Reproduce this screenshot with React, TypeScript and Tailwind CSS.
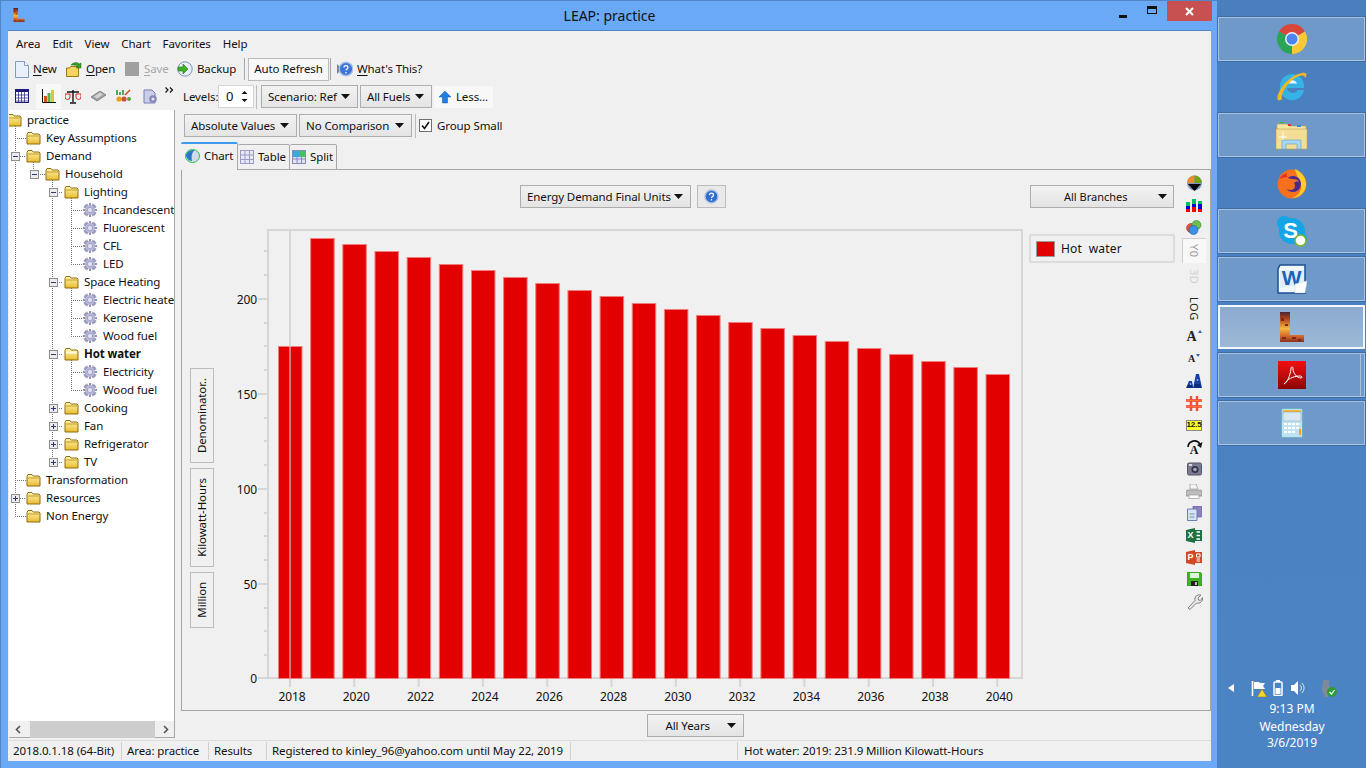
import React from "react";

const Caret = () => (
  <svg width="9" height="5" viewBox="0 0 9 5" className="shrink-0"><path d="M0 0h9L4.5 5z" fill="#111" /></svg>
);

const Drop = ({ label, cls }: { label: string; cls: string }) => (
  <div className={`flex items-center justify-between pl-[6px] pr-[7px] border border-[#adadad] bg-gradient-to-b from-[#f2f2f2] to-[#e4e4e4] whitespace-nowrap ${cls}`}>
    <span>{label}</span>
    <Caret />
  </div>
);

const Folder = ({ open = false }: { open?: boolean }) => (
  <svg width="15" height="14" viewBox="0 0 15 14" className="shrink-0">
    <defs>
      <linearGradient id="fo" x1="0" y1="0" x2="0" y2="1">
        <stop offset="0" stopColor="#fff6b8" />
        <stop offset="1" stopColor="#e8bb2c" />
      </linearGradient>
    </defs>
    <path d="M1 3.500 2 1.500h4l1.200 1.500H13l1 1V13H1z" fill="url(#fo)" stroke="#8f6d10" strokeWidth="1" />
    <path d="M2 5h11" stroke={open ? "#fffbe0" : "#c79a1a"} strokeWidth="1" />
    {open && <path d="M2 6h11" stroke="#fff" strokeWidth="1" />}
  </svg>
);

const Gear = () => (
  <svg width="14" height="14" viewBox="0 0 14 14" className="shrink-0 mr-px">
    <g stroke="#8f8fb8" strokeWidth="2">
      <path d="M7 0v14M0 7h14M2 2l10 10M12 2 2 12" />
      <path d="M3.600 .8l6.800 12.400M10.400 .8 3.600 13.200M.8 3.600l12.400 6.800M.8 10.400l12.400-6.800" strokeWidth="1.200" />
    </g>
    <circle cx="7" cy="7" r="5" fill="#b6b6d6" />
    <circle cx="7" cy="7" r="2.600" fill="#e2e2f0" stroke="#9292bb" strokeWidth=".7" />
  </svg>
);

const Expander = ({ kind }: { kind: "minus" | "plus" | "none" }) => (
  <span className="w-[9px] h-[9px] shrink-0">
    {kind !== "none" && (
      <svg width="9" height="9" viewBox="0 0 9 9">
        <rect x=".5" y=".5" width="8" height="8" fill="#ececec" stroke="#8e8e8e" />
        <path d={kind === "minus" ? "M2 4.500h5" : "M2 4.500h5M4.500 2v5"} stroke="#2a3a78" strokeWidth="1" />
      </svg>
    )}
  </span>
);

type Row = { t: string; d: number; e?: "minus" | "plus"; leaf?: boolean; b?: boolean };
const rows: Row[] = [
  { t: "practice", d: 0 },
  { t: "Key Assumptions", d: 1 },
  { t: "Demand", d: 1, e: "minus" },
  { t: "Household", d: 2, e: "minus" },
  { t: "Lighting", d: 3, e: "minus" },
  { t: "Incandescent", d: 4, leaf: true },
  { t: "Fluorescent", d: 4, leaf: true },
  { t: "CFL", d: 4, leaf: true },
  { t: "LED", d: 4, leaf: true },
  { t: "Space Heating", d: 3, e: "minus" },
  { t: "Electric heater", d: 4, leaf: true },
  { t: "Kerosene", d: 4, leaf: true },
  { t: "Wood fuel", d: 4, leaf: true },
  { t: "Hot water", d: 3, e: "minus", b: true },
  { t: "Electricity", d: 4, leaf: true },
  { t: "Wood fuel", d: 4, leaf: true },
  { t: "Cooking", d: 3, e: "plus" },
  { t: "Fan", d: 3, e: "plus" },
  { t: "Refrigerator", d: 3, e: "plus" },
  { t: "TV", d: 3, e: "plus" },
  { t: "Transformation", d: 1 },
  { t: "Resources", d: 1, e: "plus" },
  { t: "Non Energy", d: 1 },
];

const TreeLines = () => {
  const v: [number, number, number][] = [
    [15, 120, 516], [33, 162, 174], [52, 180, 462], [71, 198, 264], [71, 288, 336], [71, 360, 390],
  ];
  const h: [number, number, number][] = [
    [15, 26, 138], [20, 26, 156], [15, 26, 480], [20, 26, 498], [15, 26, 516], [38, 45, 174],
    [57, 63, 192], [57, 63, 282], [57, 63, 354], [57, 63, 408], [57, 63, 426], [57, 63, 444], [57, 63, 462],
    [71, 83, 210], [71, 83, 228], [71, 83, 246], [71, 83, 264], [71, 83, 300], [71, 83, 318], [71, 83, 336], [71, 83, 372], [71, 83, 390],
  ];
  return (
    <svg className="absolute left-0 top-0" width="166" height="610" viewBox="9 110 166 610">
      <g stroke="#777" strokeDasharray="1 1" strokeWidth="1">
        {v.map(([x, a, b], i) => <path key={i} d={`M${x + .5} ${a}V${b}`} />)}
        {h.map(([a, b, y], i) => <path key={i} d={`M${a} ${y + .5}H${b}`} />)}
      </g>
    </svg>
  );
};

const tops = [347, 239, 245, 252, 258, 265, 271, 278, 284, 291, 297, 304, 310, 316, 323, 329, 336, 342, 349, 355, 362, 368, 375];
const Chart = () => (
  <svg width="811" height="487" viewBox="214 222 811 487" className="block">
    <g stroke="#d6d6d6" fill="none">
      <rect x="268" y="230" width="754" height="448" strokeWidth="2" />
      {[299, 394, 489, 584, 678].map((y) => <path key={y} d={`M258 ${y}h10`} strokeWidth="2" />)}
      {[251, 275, 323, 346, 370, 418, 441, 465, 513, 536, 560, 608, 631, 655].map((y) => <path key={y} d={`M264 ${y}h3`} strokeWidth="2" />)}
      {[0, 1, 2, 3, 4, 5, 6, 7, 8, 9, 10, 11].map((i) => <path key={i} d={`M${290 + i * 64.3} 678v9`} strokeWidth="2" />)}
      <path d="M290 230V347" strokeWidth="2" />
    </g>
    {tops.map((t, i) => (
      <rect key={i} x={278.5 + i * 32.16} y={t - .5} width="23.500" height={679 - t} fill="#e20000" stroke="#ee7f7f" strokeWidth="1" />
    ))}
    <path d="M290 346V678" stroke="#d8d8d8" strokeOpacity=".55" strokeWidth="2" />
    <g fontSize="12" fill="#111" fontFamily="'Noto Sans', sans-serif">
      {[["200", 299], ["150", 394], ["100", 489], ["50", 584], ["0", 678]].map(([s, y]) => (
        <text key={s} x="257" y={(y as number) + 5} textAnchor="end">{s}</text>
      ))}
      {[0, 1, 2, 3, 4, 5, 6, 7, 8, 9, 10, 11].map((i) => (
        <text key={i} x={292 + i * 64.3} y="701" textAnchor="middle">{2018 + 2 * i}</text>
      ))}
    </g>
  </svg>
);

const VBtn = ({ t, h }: { t: string; h: string }) => (
  <div className={`w-[24px] ${h} flex items-center justify-center border border-[#bdbdbd]`}>
    <span className="[writing-mode:vertical-rl] rotate-180 whitespace-nowrap">{t}</span>
  </div>
);

const SideIcon = ({ children }: { children: React.ReactNode }) => (
  <div className="h-[22px] flex items-center justify-center">{children}</div>
);

const sideIcons1 = (
  <>
    <SideIcon>
      <svg width="17" height="17" viewBox="0 0 17 17">
        <circle cx="8.500" cy="8" r="7.500" fill="#7d98c9" />
        <path d="M8.500 8V.5A7.500 7.500 0 0 0 1 8z" fill="#ef8a2f" />
        <path d="M8.500 8V.5A7.500 7.500 0 0 1 16 8z" fill="#6fa51d" />
        <path d="M2 9h13l-6.500 7z" fill="#000" />
      </svg>
    </SideIcon>
    <SideIcon>
      <svg width="16" height="14" viewBox="0 0 16 14">
        <path d="M0 4h4v4H0z" fill="#00c060" /><path d="M0 8h4v3H0z" fill="#0000e0" /><path d="M0 11h4v3H0z" fill="#f00000" />
        <path d="M6 1h4v5H6z" fill="#00c060" /><path d="M6 6h4v3H6z" fill="#0000e0" /><path d="M6 9h4v5H6z" fill="#f00000" />
        <path d="M12 3h4v3h-4z" fill="#00c060" /><path d="M12 6h4v5h-4z" fill="#0000e0" /><path d="M12 11h4v3h-4z" fill="#f00000" />
      </svg>
    </SideIcon>
    <SideIcon>
      <svg width="16" height="15" viewBox="0 0 16 15">
        <circle cx="5" cy="8" r="4.500" fill="#e8523a" stroke="#a33" strokeWidth=".6" />
        <circle cx="10.500" cy="5" r="4.500" fill="#6dc04a" stroke="#3a8a2a" strokeWidth=".6" />
        <circle cx="7.500" cy="10" r="4.500" fill="#3a92e6" stroke="#1b5ea8" strokeWidth=".6" />
      </svg>
    </SideIcon>
  </>
);

const sideIcons2 = (
  <>
    <SideIcon>
      <span className="flex items-start gap-px">
        <span className="font-['Liberation_Serif',serif] font-bold text-[14px] text-[#222] leading-none">A</span>
        <svg width="4" height="3" viewBox="0 0 4 3"><path d="M2 0l2 3H0z" fill="#3366aa" /></svg>
      </span>
    </SideIcon>
    <SideIcon>
      <span className="flex items-start gap-px">
        <span className="font-['Liberation_Serif',serif] font-bold text-[10px] text-[#222] leading-none">A</span>
        <svg width="4" height="3" viewBox="0 0 4 3"><path d="M0 0h4L2 3z" fill="#3366aa" /></svg>
      </span>
    </SideIcon>
    <SideIcon>
      <svg width="16" height="14" viewBox="0 0 16 14">
        <path d="M0 14 3 7h3l1 7zM7 14 10 0h3l3 14z" fill="#1540a8" />
        <path d="M1 14 3 9h3l1 5zM9 10h5l1 4H8z" fill="#0d2a80" />
        <circle cx="4.500" cy="10" r="1" fill="#8fb0f0" /><circle cx="11.500" cy="6" r="1" fill="#8fb0f0" />
      </svg>
    </SideIcon>
    <SideIcon>
      <svg width="16" height="15" viewBox="0 0 16 15">
        <path d="M5 0v15M11 0v15M0 4.500h16M0 10.500h16" stroke="#e33" strokeWidth="2.400" />
        <path d="M5 0v15M11 0v15M0 4.500h16M0 10.500h16" stroke="#f8a020" strokeWidth=".6" />
      </svg>
    </SideIcon>
    <SideIcon>
      <span className="w-[16px] h-[11px] flex items-center justify-center bg-[#ffff30] border border-[#888] text-[8px] font-bold font-['Liberation_Sans',sans-serif] leading-none">12.5</span>
    </SideIcon>
    <SideIcon>
      <span className="relative w-[17px] h-[17px] flex items-end justify-center">
        <svg className="absolute left-0 top-0" width="17" height="9" viewBox="0 0 17 9">
          <path d="M2 8A6.500 6.500 0 0 1 14 5" fill="none" stroke="#111" strokeWidth="1.600" />
          <path d="M16.500 3 15 9l-4-3z" fill="#111" />
        </svg>
        <span className="font-['Liberation_Serif',serif] font-bold text-[12px] leading-none text-[#111]">A</span>
      </span>
    </SideIcon>
    <SideIcon>
      <svg width="15" height="14" viewBox="0 0 15 14">
        <rect x=".5" y="1" width="14" height="12" rx="1.500" fill="#7b7b92" stroke="#55556a" />
        <circle cx="8" cy="7.500" r="3.600" fill="#33334a" /><circle cx="8" cy="7.500" r="1.800" fill="#a9a9c0" />
        <rect x="2" y="2" width="3" height="2" fill="#d8d8e6" />
      </svg>
    </SideIcon>
    <SideIcon>
      <svg width="16" height="15" viewBox="0 0 16 15">
        <path d="M4 0h6l2 5H4z" fill="#f4f4f4" stroke="#999" strokeWidth=".7" />
        <path d="M1 6h14l1 3v3H0V9z" fill="#bdbdbd" stroke="#888" strokeWidth=".7" />
        <rect x="3" y="11" width="10" height="3.500" fill="#fff" stroke="#999" strokeWidth=".7" />
      </svg>
    </SideIcon>
    <SideIcon>
      <svg width="15" height="15" viewBox="0 0 15 15">
        <path d="M6 0h8.500v11H6z" fill="#8e7fc0" stroke="#6a5a9c" strokeWidth=".7" />
        <path d="M.5 3H9l1 1v10.500H.5z" fill="#d5e3f6" stroke="#6d7fae" />
        <path d="M2.500 8h5M2.500 11h5" stroke="#7a8fbb" />
      </svg>
    </SideIcon>
    <SideIcon>
      <span className="relative w-[16px] h-[15px] flex">
        <svg className="absolute left-0 top-0" width="16" height="15" viewBox="0 0 16 15">
          <path d="M0 2 9 0v15L0 13z" fill="#1d7244" />
          <path d="M9 2h7v11H9z" fill="#1d7244" />
          <path d="M10.500 4H14M10.500 7.500H14M10.500 11H14" stroke="#fff" strokeWidth="1.600" />
        </svg>
        <span className="relative w-[9px] h-[15px] flex items-center justify-center font-['Liberation_Sans',sans-serif] font-bold text-[9px] text-white">X</span>
      </span>
    </SideIcon>
    <SideIcon>
      <span className="relative w-[16px] h-[15px] flex">
        <svg className="absolute left-0 top-0" width="16" height="15" viewBox="0 0 16 15">
          <path d="M0 2 9 0v15L0 13z" fill="#d24726" />
          <path d="M9 2h7v11H9z" fill="#d24726" />
          <path d="M10.500 4H14v3h-3.500zM10.500 9H14M10.500 11H14" stroke="#fff" strokeWidth="1" fill="none" />
        </svg>
        <span className="relative w-[9px] h-[15px] flex items-center justify-center font-['Liberation_Sans',sans-serif] font-bold text-[9px] text-white">P</span>
      </span>
    </SideIcon>
    <SideIcon>
      <svg width="15" height="14" viewBox="0 0 15 14">
        <path d="M0 0h13l2 2v12H0z" fill="#3cb521" stroke="#2a8a14" strokeWidth=".6" />
        <rect x="3" y="1" width="9" height="5" fill="#dff5da" />
        <rect x="4" y="9" width="7" height="5" fill="#222" /><rect x="8" y="10" width="2" height="3" fill="#bbb" />
      </svg>
    </SideIcon>
    <SideIcon>
      <svg width="17" height="17" viewBox="0 0 17 17">
        <path d="M2 15 9 7.500C8 4 11 1 15 2l-3 3 .5 2 2 .5 2-3c1 4-3 6.500-6 5.500L4 16.500z" fill="#e8e8e8" stroke="#808080" strokeWidth="1" />
      </svg>
    </SideIcon>
  </>
);

const LMark = ({ s, id }: { s: number; id: string }) => (
  <svg width={s} height={s} viewBox="0 0 24 30">
    <defs>
      <linearGradient id={id} x1="0" y1="0" x2="0" y2="1">
        <stop offset="0" stopColor="#4d2430" />
        <stop offset=".25" stopColor="#b8481c" />
        <stop offset=".55" stopColor="#f4b840" />
        <stop offset=".8" stopColor="#d6682a" />
        <stop offset="1" stopColor="#8a2e20" />
      </linearGradient>
    </defs>
    <path d="M0 0h10v23h14v7H0z" fill={`url(#${id})`} />
    <path d="M1 6h3v3H1zM5 12h3v2H5zM12 25h4v2h-4zM18 27h3v2h-3zM2 25h4v2H2z" fill="#7c2a18" />
  </svg>
);

const TaskBtn = ({ on, active, split, children }: { on?: boolean; active?: boolean; split?: boolean; children: React.ReactNode }) => (
  <div
    className={`h-[44px] w-[147px] flex items-center justify-center relative ${
      active
        ? "border-2 border-white/90 bg-gradient-to-b from-[#8cabd0] to-[#9cb8d6]"
        : on
          ? "border border-[#a9c2e0] bg-[#6f99c8] shadow-[0_0_0_1px_#3f6ea6]"
          : ""
    }`}
  >
    {children}
    {split && <div className="absolute right-[3px] top-0 bottom-0 w-[1px] bg-[#a9c2e0]" />}
  </div>
);

const Acc = ({ k, rest, cls = "" }: { k: string; rest: string; cls?: string }) => (
  <span className={cls}><u className="underline-offset-2">{k}</u>{rest}</span>
);

const App = () => (
  <div className="w-[1366px] h-[768px] flex overflow-hidden font-['Noto_Sans',sans-serif] text-[11.5px] tracking-[-0.1px] leading-none text-[#111] bg-[#4a80bf]">
    {/* Window */}
    <div className="w-[1217px] h-full flex flex-col bg-[#69a9f5] border-l border-t border-[#4f86c6]">
      <div className="h-[29px] shrink-0 relative flex items-center justify-center">
        <div className="absolute left-[11px] top-[7px]"><LMark s={14} id="ltitle" /></div>
        <span className="text-[14px] tracking-normal text-[#111] ml-px">LEAP: practice</span>
        <div className="absolute right-[5px] top-0 h-[20px] flex items-center">
          <div className="w-[27px] flex justify-center pt-[10px] pr-[8px]"><div className="w-[8px] h-[3px] bg-[#111]" /></div>
          <div className="w-[27px] flex justify-center -mt-[2px] pr-[3px]"><div className="w-[10px] h-[8px] border border-t-[3px] border-[#111]" /></div>
          <div className="w-[45px] h-[20px] bg-[#c75050] flex items-center justify-center">
            <svg width="9" height="9" viewBox="0 0 9 9"><path d="M1 1l7 7M8 1 1 8" stroke="#fff" strokeWidth="2" /></svg>
          </div>
        </div>
      </div>

      <div className="flex-1 min-h-0 ml-[7px] mr-[6px] mb-[7px] flex flex-col bg-[#f0f0f0] border-t border-[#4f86c6]">
        {/* Menu */}
        <div className="h-[25px] shrink-0 flex items-center pl-[8px] gap-[12px]">
          {["Area", "Edit", "View", "Chart", "Favorites", "Help"].map((m) => <span key={m}>{m}</span>)}
        </div>
        {/* Toolbar */}
        <div className="h-[26px] shrink-0 flex items-center pl-[7px]">
          <svg width="14" height="17" viewBox="0 0 14 17" className="mr-[4px]"><path d="M.5.5h9l4 4v12H.5z" fill="#e8f0fb" stroke="#7f9cc4" /><path d="M9.500.5v4h4" fill="#fff" stroke="#7f9cc4" /></svg>
          <Acc k="N" rest="ew" cls="w-[25px]" />
          <svg width="17" height="17" viewBox="0 0 17 17" className="ml-[8px] mr-[3px]"><path d="M.5 7h3l1-1.500h8v10H.5z" fill="#f6d55e" stroke="#9a7a12" /><path d="M5 4c3-3 6-3 8-1l2-1v5l-5 0 2-2c-2-1-4-1-7-1z" fill="#35a02a" stroke="#1e6a18" strokeWidth=".5" /></svg>
          <Acc k="O" rest="pen" cls="w-[29px]" />
          <div className="w-[14px] h-[14px] bg-[#a0a0a0] ml-[10px] mr-[5px]" />
          <Acc k="S" rest="ave" cls="w-[24px] text-[#a8a8a8]" />
          <svg width="16" height="16" viewBox="0 0 16 16" className="ml-[9px] mr-[4px]"><circle cx="8" cy="8" r="7.200" fill="#e8eef6" stroke="#7e96b4" /><path d="M1 6h5V3l5 5-5 5v-3H1z" fill="#3fb02c" stroke="#1f7a14" strokeWidth=".6" /></svg>
          <span className="w-[39px] whitespace-nowrap">Backup</span>
          <div className="w-[1px] h-[22px] bg-[#a8a8a8] ml-[8px]" />
          <div className="h-[23px] w-[81px] ml-[3px] flex items-center justify-center bg-[#f8f8f8] border border-[#bbb]">Auto Refresh</div>
          <div className="w-[1px] h-[22px] bg-[#a8a8a8] ml-[1px]" />
          <svg width="16" height="16" viewBox="0 0 16 16" className="ml-[6px] mr-[4px]"><path d="M0 3l5 5-5 5z" fill="#7a7f95" /><circle cx="9" cy="8" r="6.800" fill="#3d74d8" stroke="#a9c0e6" strokeWidth="1.400" /><path d="M7 6.500c0-2.500 4-2.500 4 0 0 1.500-2 1.500-2 3M9 11v1.500" fill="none" stroke="#fff" strokeWidth="1.300" /></svg>
          <Acc k="W" rest="hat's This?" />
        </div>

        {/* Main */}
        <div className="flex-1 min-h-0 flex">
          {/* Left */}
          <div className="w-[168px] shrink-0 flex flex-col mb-[2px]">
            <div className="h-[28px] shrink-0 flex items-center relative">
              <svg width="14" height="14" viewBox="0 0 14 14" className="ml-[7px]"><rect x=".5" y=".5" width="13" height="13" fill="#fff" stroke="#1c1c78" /><path d="M0 1h14v2H0z" fill="#1c1c78" /><path d="M3.500 3v10M6.500 3v10M9.500 3v10M0 6h14M0 9h14M0 12h14" stroke="#1c1c78" strokeWidth=".7" /></svg>
              <div className="w-[25px] h-[25px] ml-[7px] flex items-center justify-center bg-[#f8f8f8]">
                <svg width="14" height="14" viewBox="0 0 14 14"><path d="M2 7h3v6H2z" fill="#d2561c" /><path d="M5.500 4h3v9h-3z" fill="#5fb040" /><path d="M9 1h3v12H9z" fill="#e3c23c" /><path d="M.5 0v13.500H14" fill="none" stroke="#111" /></svg>
              </div>
              <svg width="16" height="15" viewBox="0 0 16 15" className="ml-[4px]"><path d="M8 1v12M5 14h6M2 3h12" stroke="#111" strokeWidth="1.400" /><path d="M0 5h5v3a2.500 2.500 0 0 1-5 0z" fill="none" stroke="#d22" /><path d="M11 5h5v3a2.500 2.500 0 0 1-5 0z" fill="none" stroke="#d22" /></svg>
              <svg width="15" height="11" viewBox="0 0 15 11" className="ml-[10px]"><path d="M0 6 9 0l6 4-9 6z" fill="#a3a3a3" stroke="#6a6a6a" strokeWidth=".7" /><path d="M3 5.500l6-4 3 2-6 4z" fill="#d4d4d4" /></svg>
              <svg width="15" height="14" viewBox="0 0 15 14" className="ml-[10px]"><path d="M1 1v5M4 3v3M7 1v5" stroke="#2c9a3c" strokeWidth="1.600" /><path d="M9 6l5-5" stroke="#e04020" strokeWidth="1.400" /><circle cx="3" cy="10" r="2.600" fill="#e8a020" /><circle cx="8" cy="10" r="2.600" fill="#d0503a" /><circle cx="13" cy="10" r="2" fill="#5fa040" /></svg>
              <svg width="15" height="15" viewBox="0 0 15 15" className="ml-[12px]"><path d="M1 1h8l3 3v10H1z" fill="#c9cfe8" stroke="#7a7fb5" /><circle cx="10" cy="10" r="3.800" fill="#8888bb" /><circle cx="10" cy="10" r="1.500" fill="#e4e4f2" /></svg>
              <svg width="9" height="6" viewBox="0 0 9 6" className="ml-[7px] -mt-[12px]"><path d="M.5.5 3 3 .5 5.500M5 .5 7.500 3 5 5.500" fill="none" stroke="#111" strokeWidth="1.200" /></svg>
            </div>
            <div className="flex-1 min-h-0 relative overflow-hidden bg-white ml-[1px] mr-[1px] border-r border-[#a8a8a8]">
              <TreeLines />
              <div className="relative pt-px">
                {rows.map((r, i) => (
                  <div key={i} className="h-[18px] flex items-center whitespace-nowrap" style={{ marginLeft: 19 * r.d - 17 }}>
                    <Expander kind={r.e ?? "none"} />
                    <span className="w-[6px] shrink-0" />
                    {r.leaf ? <Gear /> : <Folder open={r.b} />}
                    <span className={`ml-[5px] ${r.b ? "font-bold" : ""}`}>{r.t}</span>
                  </div>
                ))}
              </div>
            </div>
            <div className="h-[17px] shrink-0 flex items-center bg-[#f0f0f0] ml-[1px] mr-[1px] border-r border-b border-[#a8a8a8]">
              <svg width="21" height="17" viewBox="0 0 21 17"><path d="M11 5 7.500 8.500 11 12" fill="none" stroke="#555" strokeWidth="1.600" /></svg>
              <div className="w-[125px] h-[17px] bg-[#cdcdcd]" />
              <svg width="19" height="17" viewBox="0 0 19 17"><path d="M9 5l3.500 3.500L9 12" fill="none" stroke="#555" strokeWidth="1.600" /></svg>
            </div>
          </div>

          {/* Right */}
          <div className="flex-1 min-w-0 ml-[5px] flex flex-col">
            <div className="h-[30px] shrink-0 flex items-center pb-[1px]">
              <span className="ml-[2px] w-[35px] whitespace-nowrap">Levels:</span>
              <div className="w-[36px] h-[23px] bg-white border border-[#d5d5d5] flex items-center justify-between pl-[7px] pr-[5px]">
                <span className="text-[13px]">0</span>
                <svg width="7" height="13" viewBox="0 0 7 13"><path d="M3.500 1 6.500 4h-6zM3.500 12 .5 9h6z" fill="#111" /></svg>
              </div>
              <div className="w-[1px] h-[24px] bg-[#bbb] ml-[2px]" />
              <Drop label="Scenario: Ref" cls="h-[23px] w-[97px] ml-[4px]" />
              <Drop label="All Fuels" cls="h-[23px] w-[72px] ml-[2px]" />
              <div className="w-[59px] h-[22px] ml-[2px] flex items-center gap-[5px] px-[5px] bg-[#f8f8f8]">
                <svg width="14" height="14" viewBox="0 0 14 14"><path d="M7 0l7 7H10v7H4V7H0z" fill="#1f7fe0" stroke="#0f57a8" strokeWidth=".6" /></svg>
                <span>Less...</span>
              </div>
            </div>
            <div className="h-[30px] shrink-0 flex items-center pb-[3px]">
              <Drop label="Absolute Values" cls="h-[23px] w-[113px] ml-[3px]" />
              <Drop label="No Comparison" cls="h-[23px] w-[113px] ml-[2px]" />
              <div className="w-[1px] h-[24px] bg-[#bbb] ml-[3px]" />
              <div className="w-[13px] h-[13px] ml-[3px] bg-white border border-[#707070] flex items-center justify-center">
                <svg width="9" height="9" viewBox="0 0 9 9"><path d="M1 4.500 3.500 7.500 8 1" fill="none" stroke="#111" strokeWidth="1.600" /></svg>
              </div>
              <span className="ml-[5px]">Group Small</span>
            </div>
            {/* Tabs */}
            <div className="h-[28px] shrink-0 flex items-end relative z-10 -mb-[1px]">
              <div className="w-[57px] h-[28px] flex items-center gap-[4px] pl-[4px] pb-[3px] bg-[#f0f0f0] border-t-[2px] border-t-[#3c9bf0] border-r border-[#a8a8a8] rounded-t-[2px]">
                <svg width="15" height="14" viewBox="0 0 15 14"><ellipse cx="7.500" cy="7" rx="7" ry="6.500" fill="#cfdcf0" stroke="#30c040" /><path d="M1 6c1-4 5-5 9-5-3 2-4 6-3 11-3 0-6-3-6-6z" fill="#2a78c8" /></svg>
                <span>Chart</span>
              </div>
              <div className="w-[52px] h-[26px] flex items-center gap-[4px] pl-[2px] bg-[#f0f0f0] border-t border-r border-b border-[#a8a8a8] rounded-t-[2px]">
                <svg width="14" height="14" viewBox="0 0 14 14"><rect x=".5" y=".5" width="13" height="13" fill="#e8e8f6" stroke="#9a9ac4" /><path d="M5 0v14M9.500 0v14M0 5h14M0 9.500h14" stroke="#9a9ac4" /></svg>
                <span>Table</span>
              </div>
              <div className="w-[47px] h-[26px] flex items-center gap-[4px] pl-[2px] bg-[#f0f0f0] border-t border-r border-b border-[#a8a8a8] rounded-t-[2px]">
                <svg width="14" height="14" viewBox="0 0 14 14"><rect x=".5" y=".5" width="13" height="13" fill="#dfe4f4" stroke="#8a8ab4" /><path d="M1 1h12v6H1z" fill="#3aa8d8" /><path d="M7 1h6v6H7z" fill="#46c060" /><path d="M0 9h14M5 7v7M9.500 7v7" stroke="#8a8ab4" /></svg>
                <span>Split</span>
              </div>
            </div>
            {/* Panel */}
            <div className="h-[542px] shrink-0 flex border border-[#a5a5a5] bg-[#f0f0f0]">
              <div className="w-[24px] ml-[8px] shrink-0 flex flex-col justify-end gap-[5px] pb-[82px]">
                <VBtn t="Denominator.." h="h-[95px]" />
                <VBtn t="Kilowatt-Hours" h="h-[99px]" />
                <VBtn t="Million" h="h-[56px]" />
              </div>
              <div className="w-[811px] shrink-0 flex flex-col">
                <div className="h-[52px] shrink-0 flex pt-[15px] pl-[306px]">
                  <Drop label="Energy Demand Final Units" cls="h-[23px] w-[171px]" />
                  <div className="w-[29px] h-[23px] ml-[6px] flex items-center justify-center border border-[#bdbdbd] bg-[#e9e9e9]">
                    <svg width="15" height="15" viewBox="0 0 15 15"><circle cx="7.500" cy="7.500" r="6.500" fill="#2f6fd0" stroke="#a9c0e6" strokeWidth="1.400" /><path d="M5.500 6c0-2.500 4-2.500 4 0 0 1.500-2 1.500-2 3M7.500 10v1.500" fill="none" stroke="#fff" strokeWidth="1.300" /></svg>
                  </div>
                </div>
                <Chart />
              </div>
              <div className="w-[146px] ml-[4px] shrink-0 flex flex-col pt-[15px]">
                <div className="ml-px h-[23px] w-[144px] flex items-center justify-between pl-[33px] pr-[6px] border border-[#adadad] bg-gradient-to-b from-[#f2f2f2] to-[#e4e4e4]">
                  <span className="text-[11px] tracking-normal">All Branches</span><Caret />
                </div>
                <div className="mt-[26px] h-[29px] flex items-center gap-[6px] pl-[5px] border-2 border-[#dcdcdc] rounded-[2px]">
                  <div className="w-[19px] h-[16px] bg-[#e20000] border border-[#9a9a9a]" />
                  <span className="whitespace-pre text-[12px] tracking-[.2px]">Hot  water</span>
                </div>
              </div>
              <div className="w-[24px] ml-[7px] shrink-0 flex flex-col pt-[2px]">
                {sideIcons1}
                <div className="h-[25px] flex items-center justify-center bg-[#f8f8f8] border-t border-l border-[#cfcfcf] text-[#999]">
                  <span className="[writing-mode:vertical-rl] text-[11px] tracking-[.5px]">Y0</span>
                </div>
                <div className="h-[28px] flex items-center justify-center text-[#cfcfcf]">
                  <span className="[writing-mode:vertical-rl] text-[11px] tracking-[.5px]">3D</span>
                </div>
                <div className="h-[35px] flex items-center justify-center text-[#222]">
                  <span className="[writing-mode:vertical-rl] text-[11px] tracking-[.5px]">LOG</span>
                </div>
                {sideIcons2}
              </div>
            </div>
            <div className="h-[27px] shrink-0 flex justify-center pt-[3px]">
              <Drop label="All Years" cls="h-[23px] w-[97px] pl-[18px] -ml-[2px]" />
            </div>
          </div>
        </div>

        {/* Status */}
        <div className="h-[21px] shrink-0 flex items-start pt-[1px] border-t border-[#dcdcdc]">
          <div className="w-[114px] h-[18px] flex items-center pl-[5px] border-r border-[#d0d0d0] whitespace-nowrap">2018.0.1.18 (64-Bit)</div>
          <div className="w-[87px] h-[18px] flex items-center pl-[5px] border-r border-[#d0d0d0] whitespace-nowrap">Area: practice</div>
          <div className="w-[58px] h-[18px] flex items-center pl-[5px] border-r border-[#d0d0d0] whitespace-nowrap">Results</div>
          <div className="w-[304px] h-[18px] flex items-center pl-[5px] border-r border-[#d0d0d0] whitespace-nowrap">Registered to kinley_96@yahoo.com until May 22, 2019</div>
          <div className="w-[167px] h-[18px] border-r border-[#d0d0d0]" />
          <div className="h-[18px] flex items-center pl-[6px] whitespace-nowrap">Hot water: 2019: 231.9 Million Kilowatt-Hours</div>
        </div>
      </div>
    </div>

    {/* Taskbar */}
    <div className="flex-1 flex flex-col bg-gradient-to-b from-[#4a7fbe] to-[#4b84c4] pl-px">
      <div className="flex flex-col gap-[4px] pt-[17px]">
        <TaskBtn on>
          <svg width="30" height="30" viewBox="0 0 30 30">
            <path d="M15 15 2 7.500A15 15 0 0 1 28 7.500z" fill="#d8473a" />
            <path d="M15 15 28 7.500A15 15 0 0 1 15 30z" fill="#f8c936" />
            <path d="M15 15 15 30A15 15 0 0 1 2 7.500z" fill="#2aa558" />
            <circle cx="15" cy="15" r="7" fill="#eaeef6" /><circle cx="15" cy="15" r="5.500" fill="#4b85ef" />
          </svg>
        </TaskBtn>
        <TaskBtn>
          <svg width="32" height="32" viewBox="0 0 32 32">
            <path d="M4 15a12 12 0 0 1 24 0v2H11a6 6 0 0 0 11 2h6a12 12 0 0 1-24-4z" fill="#35b2e6" />
            <path d="M11 12.500a5.500 5.500 0 0 1 10 0z" fill="#e8f8ff" />
            <path d="M2 29C-1 26 8 6 26 2c4-1 6 1 3 5 0-3-3-3-6-2C12 9 4 24 6 28c-1 1-3 2-4 1z" fill="#f2b824" />
          </svg>
        </TaskBtn>
        <TaskBtn on>
          <svg width="32" height="30" viewBox="0 0 32 30">
            <path d="M1 4h10l2 2h17v4H1z" fill="#f6e6a6" stroke="#b59a4e" strokeWidth=".6" />
            <path d="M4 2h4v1H4z" fill="#2fb82f" /><path d="M12 4h3v2h-3z" fill="#d33" /><path d="M21 5h4v2h-4z" fill="#2f8be6" />
            <path d="M0 9h31v20H0z" fill="#f4dd94" stroke="#c0a458" strokeWidth=".6" />
            <path d="M6 20h19v9h-4v-5H10v5H6z" fill="#a8d8f0" stroke="#5aa2cc" strokeWidth=".6" />
            <path d="M7 12v8M3 17h8" stroke="#fff" strokeWidth="1" />
          </svg>
        </TaskBtn>
        <TaskBtn>
          <svg width="30" height="32" viewBox="0 0 30 32">
            <circle cx="15" cy="17" r="14.500" fill="#f6701e" />
            <path d="M18 2c7 3 12 10 11 17-1 7-7 12-14 12 6-2 10-7 9-13-1-5-4-7-6-16z" fill="#ffcb2e" />
            <circle cx="16" cy="17" r="8" fill="#4a2a90" />
            <path d="M3 12c3 0 4-3 8-3-1 2 2 3 5 3 3 0 5 1 6 3-2-1-4 0-5 1 2 2 1 7-3 7-6 0-10-5-11-11z" fill="#f6701e" />
            <path d="M2 12c2-3 4-5 8-6-1 2 0 3 1 4-3 0-6 1-9 2z" fill="#e8342a" />
          </svg>
        </TaskBtn>
        <TaskBtn on>
          <span className="relative w-[30px] h-[30px] flex items-center justify-center">
            <svg className="absolute left-0 top-0" width="30" height="30" viewBox="0 0 30 30">
              <circle cx="7" cy="7" r="7" fill="#13a5e6" /><circle cx="23" cy="23" r="7" fill="#13a5e6" />
              <circle cx="15" cy="15" r="13" fill="#13a5e6" />
            </svg>
            <span className="relative font-['Liberation_Sans',sans-serif] font-bold text-[22px] leading-none text-white -ml-[2px]">S</span>
            <svg className="absolute left-[17px] top-[18px]" width="13" height="13" viewBox="0 0 13 13"><circle cx="6.500" cy="6.500" r="5.500" fill="#fff" stroke="#7ab628" strokeWidth="1.500" /></svg>
          </span>
        </TaskBtn>
        <TaskBtn on>
          <span className="relative w-[30px] h-[30px] flex items-center justify-center">
            <svg className="absolute left-0 top-0" width="30" height="30" viewBox="0 0 30 30">
              <path d="M3 1h25v28H1V5z" fill="#f2f7fc" stroke="#1c4f94" strokeWidth="1.500" />
              <path d="M3 6h24v14L3 24z" fill="#e2eef9" />
            </svg>
            <span className="relative font-['Liberation_Sans',sans-serif] font-bold text-[21px] leading-none text-[#1a64b8] -mt-[3px]">W</span>
            <svg className="absolute left-[17px] top-[16px]" width="13" height="13" viewBox="0 0 13 13"><path d="M1 4l12-3-2 12H1z" fill="#fff" stroke="#c9d9ea" strokeWidth=".6" /></svg>
          </span>
        </TaskBtn>
        <TaskBtn active><LMark s={30} id="ltask" /></TaskBtn>
        <TaskBtn on split>
          <svg width="28" height="28" viewBox="0 0 28 28">
            <defs><linearGradient id="pdf" x1="0" y1="0" x2="0" y2="1"><stop offset="0" stopColor="#f50f0f" /><stop offset="1" stopColor="#8a0505" /></linearGradient></defs>
            <rect width="28" height="28" fill="url(#pdf)" />
            <path d="M6 23c3-1 6-8 7-15 0-3 2-3 2 0 0 4 4 9 8 9 2 0 1-2-1-2-5 0-11 2-14 6-1 1-2 2-2 2z" fill="none" stroke="#fff" strokeWidth="1" />
          </svg>
        </TaskBtn>
        <TaskBtn on>
          <svg width="22" height="30" viewBox="0 0 22 30">
            <rect x=".5" y=".5" width="21" height="29" rx="1.500" fill="#bfe3f0" stroke="#6cb0c8" />
            <rect x="2" y="2" width="18" height="2" fill="#f6b63c" />
            <rect x="2" y="4" width="18" height="9" fill="#d9e8f2" stroke="#7d9db8" strokeWidth=".5" />
            <path d="M3 15h3v2H3zm4 0h3v2H7zm4 0h3v2h-3zM3 19h3v2H3zm4 0h3v2H7zm4 0h3v2h-3zM3 23h3v2H3zm4 0h3v2H7zm4 0h3v2h-3zM15 15h3v2h-3zM15 19h3v2h-3z" fill="#fff" />
            <rect x="18" y="21" width="2" height="6" fill="#f6a21e" />
          </svg>
        </TaskBtn>
      </div>

      <div className="mt-[228px] h-[30px] relative flex items-center">
        <svg width="6" height="8" viewBox="0 0 6 8" className="ml-[10px]"><path d="M6 0v8L0 4z" fill="#fff" /></svg>
        <svg width="17" height="17" viewBox="0 0 17 17" className="ml-[17px]">
          <path d="M1.500 1v15" stroke="#fff" strokeWidth="1.600" /><path d="M3 2h5l1 1h5l-2 3 2 3H3z" fill="#fff" />
          <path d="M11 9l5 8H6z" fill="#f4d434" stroke="#8a7410" strokeWidth=".6" />
        </svg>
        <svg width="10" height="16" viewBox="0 0 10 16" className="ml-[5px]"><rect x="1" y="2" width="8" height="13.500" rx="1" fill="none" stroke="#fff" strokeWidth="1.500" /><rect x="3" y="0" width="4" height="2" fill="#fff" /><rect x="2.500" y="8" width="5" height="6" fill="#fff" /></svg>
        <svg width="15" height="14" viewBox="0 0 15 14" className="ml-[8px]"><path d="M0 4h3l4-4v14L3 10H0z" fill="#fff" /><path d="M9 4a4 4 0 0 1 0 6M11 2a7 7 0 0 1 0 10" fill="none" stroke="#dbe6f4" strokeWidth="1" /></svg>
        <svg width="16" height="17" viewBox="0 0 16 17" className="ml-[15px]"><path d="M2 0h6v6H2zM1 6h8v6l-2 2v3H3v-3l-2-2z" fill="#7f8a96" /><circle cx="11" cy="12" r="5" fill="#2f9c3a" /><path d="M8.500 12l2 2 3-4" fill="none" stroke="#fff" strokeWidth="1.200" /></svg>
      </div>
      <div className="flex flex-col items-center text-white text-[12px] tracking-normal">
        <span>9:13 PM</span>
        <span className="mt-[6px]">Wednesday</span>
        <span className="mt-[4px]">3/6/2019</span>
      </div>
    </div>
  </div>
);

export default App;
